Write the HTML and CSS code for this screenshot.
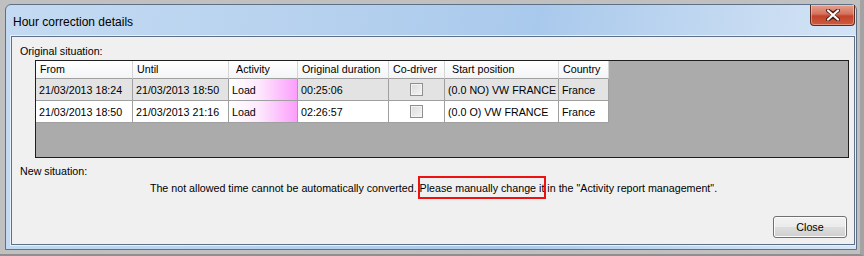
FILE: index.html
```html
<!DOCTYPE html>
<html lang="en">
<head>
    <meta charset="UTF-8">
    <title>Hour correction details</title>
    <link rel="stylesheet" href="styles.css">
</head>
<body>
    <div class="desk">
        <div class="window">
            <div class="titlebar">
                <span class="title">Hour correction details</span>
                <button class="close-x" aria-label="Close">
                    <svg width="16" height="12" viewBox="0 0 16 12">
                        <path d="M3 1.5 L8 5 L13 1.5 M3 10.5 L8 7 L13 10.5" fill="none" stroke="#4a1a14" stroke-width="4" stroke-linecap="round"/>
                        <path d="M3 1.5 L13 10.5 M13 1.5 L3 10.5" fill="none" stroke="#ffffff" stroke-width="2.2" stroke-linecap="round"/>
                    </svg>
                </button>
            </div>

            <div class="client">
                <div class="label">Original situation:</div>

                <div class="grid-box">
                    <div class="grid">
                        <div class="hd">From</div>
                        <div class="hd">Until</div>
                        <div class="hd act">Activity</div>
                        <div class="hd">Original duration</div>
                        <div class="hd">Co-driver</div>
                        <div class="hd pos">Start position</div>
                        <div class="hd">Country</div>

                        <div class="cell alt">21/03/2013 18:24</div>
                        <div class="cell alt">21/03/2013 18:50</div>
                        <div class="cell activity">Load</div>
                        <div class="cell alt">00:25:06</div>
                        <div class="cell alt check-cell"><span class="check"></span></div>
                        <div class="cell alt">(0.0 NO) VW FRANCE</div>
                        <div class="cell alt">France</div>

                        <div class="cell">21/03/2013 18:50</div>
                        <div class="cell">21/03/2013 21:16</div>
                        <div class="cell activity">Load</div>
                        <div class="cell">02:26:57</div>
                        <div class="cell check-cell"><span class="check"></span></div>
                        <div class="cell">(0.0 O) VW FRANCE</div>
                        <div class="cell">France</div>
                    </div>
                </div>

                <div class="label new">New situation:</div>
                <p class="message">The not allowed time cannot be automatically converted. <span class="marked">Please manually change it</span> in the "Activity report management".</p>

                <div class="actions">
                    <button class="btn">Close</button>
                </div>
            </div>
        </div>
    </div>
</body>
</html>
```

FILE: styles.css
```css
* {
    margin: 0;
    padding: 0;
    box-sizing: border-box;
}

body {
    font-family: 'Liberation Sans', Arial, sans-serif;
    font-size: 10.7px;
    color: #000;
    background: #c0c0c0;
}

.desk {
    width: 864px;
    height: 256px;
    overflow: hidden;
    padding: 4px 0 0 5px;
    background: #c0c0c0;
    border-right: 4px solid #a3a3a3;
    border-bottom: 2px solid #8f8f8f;
}

/* window frame */
.window {
    width: 852px;
    height: 246px;
    border: 1px solid #5f6f86;
    border-radius: 6px 6px 0 0;
    background: linear-gradient(100deg, #c4daf2 0%, #b6d1ee 35%, #a9c9ec 60%, #c8dcf2 85%, #d6e6f7 100%);
    padding: 0 1px 4px 5px;
    display: flex;
    flex-direction: column;
}

.titlebar {
    height: 31px;
    display: flex;
    justify-content: space-between;
    align-items: flex-start;
}

.title {
    font-size: 12px;
    margin: 10px 0 0 2px;
    color: #000;
}

.close-x {
    width: 45px;
    height: 21px;
    border: 1px solid #5a2a22;
    border-top: none;
    border-radius: 0 0 4px 4px;
    background: linear-gradient(#e7a08e 0%, #d4725d 45%, #c2432c 55%, #cf5a3d 100%);
    display: flex;
    align-items: center;
    justify-content: center;
    box-shadow: inset 0 0 0 1px rgba(255,255,255,0.35);
}

.client {
    flex: 1;
    background: #f0f0f0;
    border: 1px solid #5e6f88;
    box-shadow: 0 0 0 1px #e8f1fb;
    position: relative;
    display: flex;
    flex-direction: column;
}

.label {
    margin: 8px 0 0 8px;
    line-height: 12px;
}

/* data grid */
.grid-box {
    margin: 3px 5px 0 23px;
    height: 98px;
    background: #ababab;
    border: 1px solid #1e1e1e;
}

.grid {
    display: grid;
    grid-template-columns: 97px 96px 69px 91px 56px 114px 50px;
    grid-template-rows: 18px 22px 22px;
}

.hd {
    background: linear-gradient(#ffffff, #f3f4f6);
    border-right: 1px solid #d5d5d5;
    border-bottom: 1px solid #a0a0a0;
    padding: 2px 0 0 4px;
    line-height: 13px;
}

.hd.act {
    padding-left: 7px;
}

.hd.pos {
    padding-left: 7px;
}

.cell {
    background: #fff;
    border-right: 1px solid #a0a0a0;
    border-bottom: 1px solid #a0a0a0;
    padding: 5px 0 0 3px;
    line-height: 13px;
    white-space: nowrap;
}

.cell.alt {
    background: #e3e3e3;
}

.cell.activity {
    background: linear-gradient(90deg, #ffffff 0%, #fde8fd 45%, #fb9efb 100%);
}

.check-cell {
    display: flex;
    justify-content: center;
    align-items: center;
    padding: 0;
}

.check {
    width: 13px;
    height: 13px;
    border: 1px solid #8e8f8f;
    background: linear-gradient(135deg, #dcdcdc, #f4f4f4);
    box-shadow: inset 0 0 0 1px #f4f4f4;
}

.label.new {
    margin-top: 7px;
}

.message {
    text-align: center;
    margin-top: 5px;
    padding-left: 1px;
    line-height: 13px;
}

/* annotation frame drawn over the sentence */
.marked {
    position: relative;
}

.marked::after {
    content: "";
    position: absolute;
    left: -2px;
    right: -2px;
    top: -6px;
    bottom: -5px;
    border: 2px solid #ee1111;
}

.actions {
    margin-top: auto;
    display: flex;
    justify-content: flex-end;
    padding: 0 7px 6px 0;
}

.btn {
    width: 74px;
    height: 22px;
    font-family: 'Liberation Sans', Arial, sans-serif;
    font-size: 10.7px;
    color: #000;
    border: 1px solid #707070;
    border-radius: 3px;
    background: linear-gradient(#f2f2f2 0%, #ebebeb 50%, #dddddd 51%, #cfcfcf 100%);
    box-shadow: inset 0 0 0 1px #fcfcfc;
}
```
